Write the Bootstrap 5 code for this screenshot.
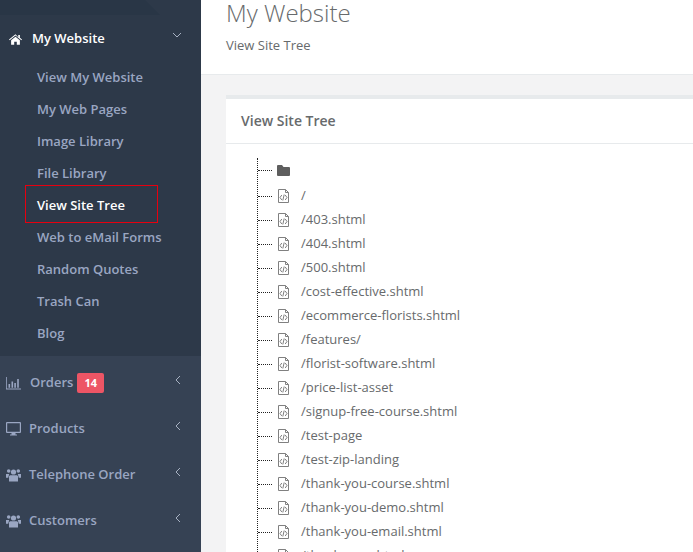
<!DOCTYPE html>
<html lang="en"><head><meta charset="utf-8"><title>View Site Tree</title>
<link href="https://cdn.jsdelivr.net/npm/bootstrap@5.3.0/dist/css/bootstrap.min.css" rel="stylesheet">
<style>
html,body{height:552px;overflow:hidden}
body{font-family:"Open Sans",sans-serif;font-size:13px;color:#676a6c;background:#f3f3f4}
.shell{height:552px;overflow:hidden}
.side{width:201px;flex:none;background:#2d3949;height:552px}
.side-top{height:15px;background:#293646;width:160px;clip-path:polygon(0 0,145px 0,160px 100%,0 100%)}
.side a{text-decoration:none}
.lvl1{height:46px;padding:0 20px 0 6px;font-weight:600;color:#9aa6c2;font-size:13px;position:relative}
.lvl1.open{color:#fff;padding-top:2px}
.ic{width:15px;height:14px;fill:currentColor;flex:none;margin-right:8px}
.ic.wide{margin-right:9px}
.open .ic{margin-right:10px;margin-left:3px;width:13px}
.chev{position:absolute;right:19px;top:15px;width:8px;height:10px;fill:none;stroke:#a7b1c2;stroke-width:1}
.chev.down{width:10px;height:6px;top:17px;right:19px}
.subs{margin:0;padding:0;list-style:none;height:295px}
.subs a{display:block;height:32px;line-height:32px;padding-left:37px;color:#9aa6c2;font-weight:600;font-size:13px;white-space:nowrap}
.subs .cur a{color:#fff;margin:-4px 0 -2px 25px;padding-left:11px;width:133px;height:38px;line-height:38px;border:1px solid #e6000f}
.lower{background:#364254;height:196px;padding-top:4px}
.main{flex:1;min-width:0}
.phead{background:#fff;height:75px;border-bottom:1px solid #e7eaec;padding:0 25px}
.ptitle{font-size:24px;font-weight:300;line-height:26px;margin:0;color:#676a6c}
.psub{font-size:13px;line-height:18px;margin:10px 0 0}
.pbody{padding:20px 0 0 25px}
.box{background:#fff;border-top:4px solid #e7eaec;height:500px}
.box-h{height:45px;border-bottom:1px solid #e7eaec;padding:0 15px;font-size:14px;font-weight:600;line-height:43px}
.tree{list-style:none;margin:14px 0 0 31px;padding:0;border-left:1px dotted #222}
.tree li{height:24px;display:flex;align-items:center;white-space:nowrap}
.tree li.root{height:26px;padding-bottom:2px}
.dash{width:14px;border-top:1px dotted #222;margin-right:5px;flex:none}
.fi{width:13px;height:14px;margin-right:11px;flex:none;fill:none;stroke:#808080;stroke-width:1}
.fo{width:13px;height:11px;fill:#5e5e5e;flex:none}
.pill{background:#ed5565;color:#fff;font-size:11px;font-weight:700;padding:0 7px;height:20px;line-height:20px;border-radius:2px;margin-left:4px}
</style></head>
<body>
<svg width="0" height="0" class="position-absolute"><defs>
<symbol id="code" viewBox="0 0 13 14"><path d="M1.500.500h7l3 3v10h-10zM8.500.500v3h3M4.800 6 3 8.500 4.800 11M8.200 6 10 8.500 8.200 11M7.200 5.500l-1.400 6"/></symbol>
<symbol id="users" viewBox="0 0 15 14"><circle cx="7.500" cy="4" r="2.600"/><circle cx="2.700" cy="3" r="1.800"/><circle cx="12.300" cy="3" r="1.800"/><path d="M4 7.200h7l1 1V13.500H3V8.200zM0 6h3.200L2.200 9.800H0zM11.800 6H15v3.800h-2.200z"/></symbol>
</defs></svg>
<div class="d-flex shell">
<nav class="side">
<div class="side-top"></div>
<a href="#" class="lvl1 open d-flex align-items-center">
<svg class="ic" viewBox="0 0 16 14"><path d="M8 1 0 7.600l.8 1L8 2.800l7.200 5.800.8-1-2.600-2.200V2h-2v2.700zM2.600 8.600V14h3.800v-3.600h3.200V14h3.800V8.600L8 4.300z"/></svg>My Website
<svg class="chev down" viewBox="0 0 10 6"><path d="M1 1l4 4 4-4"/></svg></a>
<ul class="subs">
<li><a href="#">View My Website</a></li><li><a href="#">My Web Pages</a></li><li><a href="#">Image Library</a></li><li><a href="#">File Library</a></li>
<li class="cur"><a href="#">View Site Tree</a></li>
<li><a href="#">Web to eMail Forms</a></li><li><a href="#">Random Quotes</a></li><li><a href="#">Trash Can</a></li><li><a href="#">Blog</a></li>
</ul>
<div class="lower">
<a href="#" class="lvl1 d-flex align-items-center"><svg class="ic wide" viewBox="0 0 15 14"><path d="M0 1h.8v11.600H15v.8H0zM2.500 8h1.600v3.800H2.500zM5.500 5.500h1.600v6.300H5.500zM8.300 7h1.600v4.800H8.300zM11.200 3h1.600v8.800h-1.600z"/></svg>Orders<span class="pill">14</span><svg class="chev" viewBox="0 0 8 10"><path d="M6 1 2 5l4 4"/></svg></a>
<a href="#" class="lvl1 d-flex align-items-center"><svg class="ic" viewBox="0 0 15 14"><path fill-rule="evenodd" d="M1 0h13a1 1 0 0 1 1 1v9a1 1 0 0 1-1 1H9.500v1.500H11v1H4v-1h1.500V11H1a1 1 0 0 1-1-1V1a1 1 0 0 1 1-1zM1.200 1.200v8.600h12.600V1.200z"/></svg>Products<svg class="chev" viewBox="0 0 8 10"><path d="M6 1 2 5l4 4"/></svg></a>
<a href="#" class="lvl1 d-flex align-items-center"><svg class="ic"><use href="#users"/></svg>Telephone Order<svg class="chev" viewBox="0 0 8 10"><path d="M6 1 2 5l4 4"/></svg></a>
<a href="#" class="lvl1 d-flex align-items-center"><svg class="ic"><use href="#users"/></svg>Customers<svg class="chev" viewBox="0 0 8 10"><path d="M6 1 2 5l4 4"/></svg></a>
</div>
</nav>
<main class="main">
<header class="phead"><h2 class="ptitle">My Website</h2><p class="psub">View Site Tree</p></header>
<div class="pbody"><section class="box">
<div class="box-h">View Site Tree</div>
<ul class="tree">
<li class="root"><span class="dash"></span><svg class="fo" viewBox="0 0 13 11"><path d="M1 0h4l1.500 2H12a1 1 0 0 1 1 1v7a1 1 0 0 1-1 1H1a1 1 0 0 1-1-1V1a1 1 0 0 1 1-1z"/></svg></li>
<li><span class="dash"></span><svg class="fi"><use href="#code"/></svg>/</li>
<li><span class="dash"></span><svg class="fi"><use href="#code"/></svg>/403.shtml</li>
<li><span class="dash"></span><svg class="fi"><use href="#code"/></svg>/404.shtml</li>
<li><span class="dash"></span><svg class="fi"><use href="#code"/></svg>/500.shtml</li>
<li><span class="dash"></span><svg class="fi"><use href="#code"/></svg>/cost-effective.shtml</li>
<li><span class="dash"></span><svg class="fi"><use href="#code"/></svg>/ecommerce-florists.shtml</li>
<li><span class="dash"></span><svg class="fi"><use href="#code"/></svg>/features/</li>
<li><span class="dash"></span><svg class="fi"><use href="#code"/></svg>/florist-software.shtml</li>
<li><span class="dash"></span><svg class="fi"><use href="#code"/></svg>/price-list-asset</li>
<li><span class="dash"></span><svg class="fi"><use href="#code"/></svg>/signup-free-course.shtml</li>
<li><span class="dash"></span><svg class="fi"><use href="#code"/></svg>/test-page</li>
<li><span class="dash"></span><svg class="fi"><use href="#code"/></svg>/test-zip-landing</li>
<li><span class="dash"></span><svg class="fi"><use href="#code"/></svg>/thank-you-course.shtml</li>
<li><span class="dash"></span><svg class="fi"><use href="#code"/></svg>/thank-you-demo.shtml</li>
<li><span class="dash"></span><svg class="fi"><use href="#code"/></svg>/thank-you-email.shtml</li>
<li><span class="dash"></span><svg class="fi"><use href="#code"/></svg>/thank-you.shtml</li>
</ul>
</section></div>
</main>
</div>
<script src="https://cdn.jsdelivr.net/npm/bootstrap@5.3.0/dist/js/bootstrap.bundle.min.js"></script>
</body></html>
